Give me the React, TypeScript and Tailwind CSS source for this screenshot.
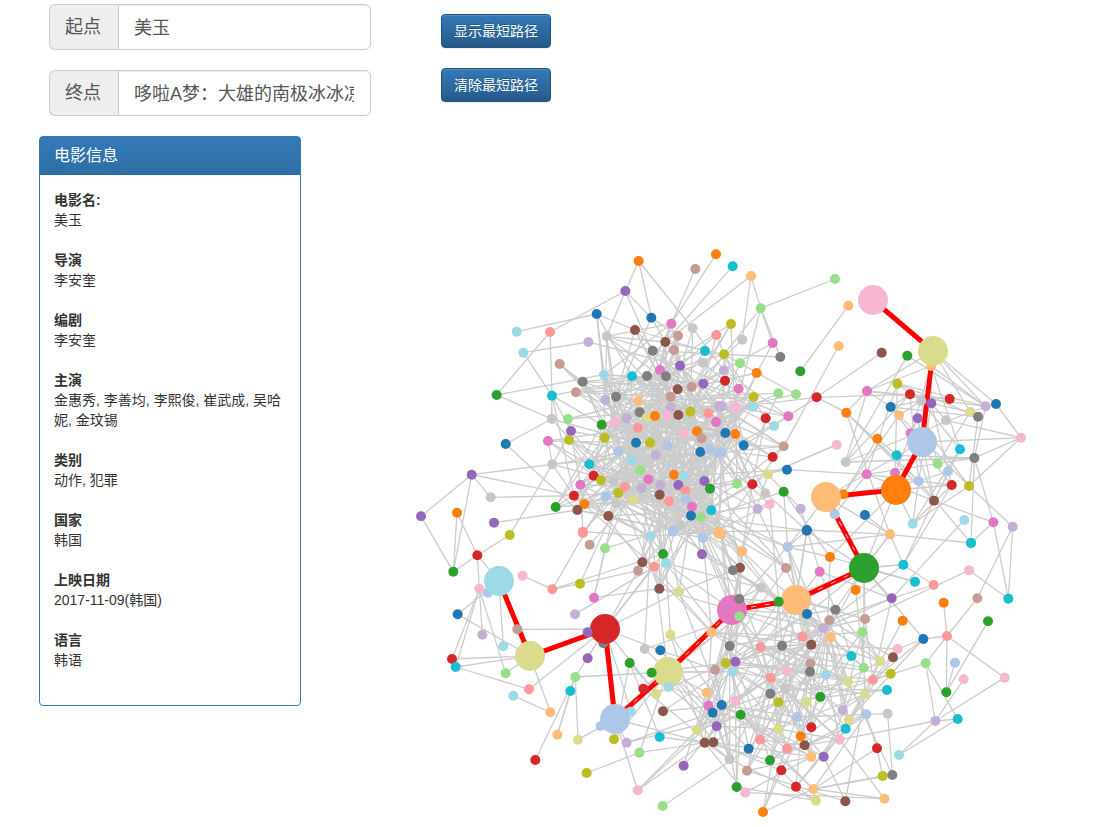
const COLORS: Record<string, string> = {
  b: '#1f77b4', B: '#aec7e8', o: '#ff7f0e', O: '#ffbb78', g: '#2ca02c', G: '#98df8a',
  r: '#d62728', R: '#ff9896', p: '#9467bd', P: '#c5b0d5', n: '#8c564b', N: '#c49c94',
  m: '#e377c2', M: '#f7b6d2', a: '#7f7f7f', A: '#c7c7c7', y: '#bcbd22', Y: '#dbdb8d',
  c: '#17becf', C: '#9edae5',
};

type GraphNode = { x: number; y: number; c: string; r: number };

// node lists: colour key + position, read off at 3x per quadrant
const parse = (ox: number, oy: number, s: string): GraphNode[] =>
  s.trim().split(/\s+/).map((t) => {
    const [x, y] = t.slice(1).split(',').map(Number);
    return { x: ox + x / 3, y: oy + y / 3, c: COLORS[t[0]], r: 5 };
  });

const topLeft = parse(400, 240, `o716,63 N886,87 o948,43 p676,153 b590,222 b754,233 m814,251 A878,265 N834,287 R949,285 n705,270 A620,289 P565,306 n796,306 R450,276 C350,275 C370,338 a758,332 N822,330 c915,333 N479,372 m780,390 p840,377 A908,368 C612,404 c696,409 a741,408 a798,409 a548,425 g290,465 c456,467 N528,457 n833,448 N875,441 p910,431 P616,480 a648,470 O714,483 N812,470 P812,502 A455,537 G504,537 a719,517 Y741,532 o765,528 M802,526 n835,525 y871,515 R925,520 P957,498 g605,554 M643,547 P680,535 m948,546 p513,573 R714,563 M853,581 o891,574 N905,595 m444,603 y507,600 y614,593 b317,612 b708,608 y750,608 B803,617 b901,636 B928,628 B957,638 B655,635 P767,645 A457,673 c568,673 C694,660 G721,690 p215,704 r581,707 y603,721 o822,704 C850,708 p913,723 A640,722 m745,718 P781,735 p835,735 m541,734 R675,741 P725,745 g930,746 R856,752 A272,772 r522,767 B617,769 y655,759 n779,764 Y700,781 R807,784 B857,777 A649,790 o553,792 g467,801 n532,810 n625,828 m876,800 c934,811 b873,827 G903,832 p63,829 o171,818 p282,848 A840,856 B820,870 R548,875 O955,875`);

const right = parse(720, 260, `c38,19 O93,48 G345,57 O385,137 G122,145 y33,192 A67,239 m158,249 O356,258 n485,278 g562,287 a181,291 y12,283 G60,310 g241,334 o110,339 P12,331 r15,362 m56,386 y101,411 G175,400 G228,403 r290,412 m441,393 y532,371 r570,403 r689,417 A604,422 p634,430 P797,439 b828,432 b512,441 o379,458 O537,466 p593,475 Y751,456 a774,470 A678,481 P5,439 M48,441 C100,440 r137,475 m205,469 C162,498 b16,519 o46,522 b71,556 M903,533 o472,536 c720,568 c530,586 N191,559 M350,554 r158,591 a763,594 A377,606 B5,578 G653,611 B684,634 b201,629 Y144,643 m440,643 B596,663 G51,671 r97,673 r695,675 y747,678 A136,700 g191,695 n642,722 M149,733 P113,747 P242,746 B344,763 b435,765 C578,791 C733,780 m820,787 P878,800 b261,810 O510,823 c753,849 B203,860 O66,873 O4,823`);

const bottomLeft = parse(400, 530, `y329,15 R549,9 N569,44 G615,55 C752,19 B819,5 B909,24 O955,12 r232,76 g160,125 g789,72 p906,73 n727,97 R763,110 C798,100 N714,122 M368,137 M238,176 R457,178 y540,161 n778,176 Y837,185 m582,203 b173,253 P525,253 P247,314 N352,298 p563,307 Y811,314 O935,307 A734,357 b781,361 C310,349 r156,387 c167,411 p563,385 g689,399 g755,428 G317,430 G526,441 N945,419 R387,478 r730,476 C806,471 C340,497 c511,483 Y769,491 O920,488 m925,527 b938,548 O451,547 n789,544 p950,589 Y891,601 O472,614 Y534,629 y642,628 P680,638 c779,621 n914,638 n940,637 G718,668 r406,690 y560,729 p851,707 M713,781 G788,828`);

const bottomRight = parse(700, 530, `O570,13 b320,2 c813,39 O127,64 B263,51 o390,81 c610,104 N258,114 m359,125 n120,113 a99,121 c645,155 M807,121 R701,165 A182,173 o467,180 p575,205 o731,218 N832,205 c925,206 a118,207 G118,259 g236,215 b321,252 a406,239 N388,271 N495,267 o608,272 g864,274 R741,318 b670,327 P370,295 G487,306 O392,322 R308,320 n334,344 a246,347 R182,351 a89,348 M593,357 c454,378 n579,382 Y541,394 G677,400 B765,398 y77,399 p106,395 N331,400 C99,425 G491,413 a330,425 C378,434 M260,423 R212,443 y572,431 M791,448 M914,443 Y444,455 R519,449 c561,480 g739,487 A255,477 a211,491 Y495,493 g361,501 M106,512 y235,517 Y319,516 b65,525 P428,540 g122,554 B291,561 B499,553 A563,551 Y446,570 P706,573 c773,567 Y235,597 r334,592 c437,596 o302,619 M419,629 R180,629 n314,646 b146,656 r531,655 R261,656 C597,675 O334,680 p371,680 A89,688 g210,691 N141,722 r244,721 y548,738 a577,735 g110,771 r288,770 O340,777 M136,788 Y348,812 n436,814 O553,806 o189,846`);

// small nodes that the big ones partly cover
const under = [
  ...parse(720, 260, `O633,318 m572,520 m525,639 o370,703`),
  ...parse(400, 530, `B264,188 a610,340 B602,588 C693,545`),
];

const big: GraphNode[] = [
  { x: 873, y: 300, c: COLORS.M, r: 15 },
  { x: 933, y: 351, c: COLORS.Y, r: 15 },
  { x: 922, y: 442, c: COLORS.B, r: 15 },
  { x: 896, y: 490, c: COLORS.o, r: 15 },
  { x: 826, y: 497, c: COLORS.O, r: 15 },
  { x: 864, y: 568, c: COLORS.g, r: 15 },
  { x: 796, y: 600, c: COLORS.O, r: 15 },
  { x: 732, y: 610, c: COLORS.m, r: 15 },
  { x: 668, y: 672, c: COLORS.Y, r: 15 },
  { x: 615, y: 719, c: COLORS.B, r: 15 },
  { x: 605, y: 629, c: COLORS.r, r: 15 },
  { x: 530, y: 656, c: COLORS.Y, r: 15 },
  { x: 499, y: 581, c: COLORS.C, r: 15 },
];

const small = [...topLeft, ...right, ...bottomLeft, ...bottomRight];
const all = [...under, ...big, ...small];

// links on the rim of the graph, snapped to the nearest node
const RIM = `639,261-625,291 625,291-550,332 625,291-651,318 625,291-607,336 517,332-597,314 597,314-604,375 597,314-635,330 550,332-552,396 523,353-588,342 523,353-552,396 497,395-550,332 497,395-552,419 552,396-552,419 506,444-552,419 506,444-577,510 548,441-552,464 472,475-552,464 472,475-491,497 472,475-421,516 472,475-453,572 491,497-574,496 494,523-577,510 552,464-510,535 421,516-453,572 457,513-453,572 457,513-490,560 510,535-477,555 453,572-477,555 477,555-499,581 477,555-479,589 522,576-552,589 552,589-580,584 580,584-638,571 594,598-605,548 594,598-660,589 575,614-660,571 458,614-499,581 458,614-530,656 482,635-479,589 503,646-499,581 452,659-479,589 455,667-479,589 452,659-530,656 455,667-530,656 455,667-529,690 505,673-479,589 505,673-530,656 514,696-550,712 529,690-605,629 550,712-530,656 558,734-575,677 558,734-571,691 578,740-575,677 578,740-615,719 535,760-575,677 587,773-640,753 638,790-730,700 663,806-740,750 695,269-671,324 716,254-671,324 733,266-672,340 751,276-672,340 751,276-761,308 835,279-761,308 761,308-781,357 761,308-772,343 761,308-725,354 848,306-800,371 839,346-784,446 882,352-817,397 817,397-846,413 908,356-846,462 933,351-986,407 933,351-996,404 933,351-969,412 996,404-969,412 986,407-974,458 1021,438-974,458 1021,438-969,486 1021,438-922,442 964,520-890,600 993,522-1008,599 1012,526-1001,570 1012,526-977,598 969,570-860,620 933,585-903,565 933,585-892,599 944,603-943,640 977,598-947,636 1008,599-965,570 988,621-946,692 947,636-923,639 947,636-926,663 947,636-1005,678 947,636-946,692 923,639-898,649 926,663-958,719 926,663-936,721 955,663-946,692 964,679-936,721 1005,678-936,721 936,721-958,719 936,721-847,740 958,719-899,755 899,755-936,721 892,775-883,775 883,775-877,748 892,775-887,713 763,812-781,770 816,800-737,787 884,799-745,792 884,799-813,789 845,801-824,757 813,789-816,800 813,789-892,775 813,789-877,748 813,789-883,775 864,568-884,530 864,568-903,565 864,568-892,599 864,568-915,582 864,568-835,610 864,568-865,619 826,497-922,442 826,497-870,540 893,534-903,565 893,534-865,515 893,534-807,530 893,534-787,547 919,481-912,524 952,485-912,524 969,486-912,524 846,462-912,390 846,462-969,412 846,462-966,458 846,413-912,490 846,413-936,495 846,413-880,540 867,391-846,413 867,391-846,462 867,391-986,407 867,391-950,399`;

const nearest = (x: number, y: number) => {
  let best = all[0];
  let d = Infinity;
  for (const n of all) {
    const dd = (n.x - x) ** 2 + (n.y - y) ** 2;
    if (dd < d) {
      d = dd;
      best = n;
    }
  }
  return best;
};

const links: [GraphNode, GraphNode][] = RIM.split(' ').map((t) => {
  const [a, b] = t.split('-').map((p) => p.split(',').map(Number));
  return [nearest(a[0], a[1]), nearest(b[0], b[1])];
});

// dense middle of the clusters, seeded so that it draws the same each run
let seed = 20171109;
const rand = () => {
  seed = (seed * 1664525 + 1013904223) >>> 0;
  return seed / 4294967296;
};
const dist = (a: GraphNode, b: GraphNode) => Math.hypot(a.x - b.x, a.y - b.y);
const CLUSTERS = [
  { x: 655, y: 455, r: 100, reach: 120, p: 0.06 },
  { x: 660, y: 350, r: 70, reach: 100, p: 0.035 },
  { x: 785, y: 700, r: 100, reach: 125, p: 0.06 },
  { x: 925, y: 440, r: 80, reach: 100, p: 0.065 },
  { x: 690, y: 580, r: 70, reach: 120, p: 0.03 },
  { x: 820, y: 590, r: 60, reach: 100, p: 0.05 },
];
for (const cl of CLUSTERS) {
  const core = all.filter((n) => Math.hypot(n.x - cl.x, n.y - cl.y) < cl.r);
  for (const a of core) {
    for (const b of all) {
      if (a !== b && dist(a, b) < cl.reach && rand() < cl.p) links.push([a, b]);
    }
  }
}

// fans round the big nodes on the lower part of the path
for (const hub of big.slice(5, 11)) {
  for (const b of all) {
    if (hub !== b && dist(hub, b) < 95 && rand() < 0.2) links.push([hub, b]);
  }
}

// every node that is still loose hangs on two of its neighbours
for (const a of small) {
  if (links.some(([p, q]) => p === a || q === a)) continue;
  const near = small.filter((b) => b !== a && dist(a, b) < 90);
  for (let k = 0; k < 2 && near.length; k++) {
    links.push([a, near[Math.floor(rand() * near.length)]]);
  }
}

const PATH = big.map((n) => `${n.x},${n.y}`).join(' ');

function Field({ label, value }: { label: string; value: string }) {
  return (
    <div className="flex h-[46px] w-[322px] text-[18px] text-[#555]">
      <span className="flex w-[69px] shrink-0 items-center justify-center rounded-l-md border border-r-0 border-[#ccc] bg-[#eee] pr-0.5">
        {label}
      </span>
      <input
        readOnly
        value={value}
        className="min-w-0 flex-1 rounded-r-md border border-[#ccc] bg-white pl-[15px] pr-4 pt-px shadow-[inset_0_1px_1px_rgba(0,0,0,0.075)] outline-none"
      />
    </div>
  );
}

function Info({ label, value }: { label: string; value: string }) {
  return (
    <div>
      <div className="font-bold">{label}</div>
      <div>{value}</div>
    </div>
  );
}

function PathButton({ children }: { children: string }) {
  return (
    <button className="h-[34px] w-[110px] rounded border border-[#245580] bg-gradient-to-b from-[#337ab7] to-[#265a88] text-sm text-white [text-shadow:0_-1px_0_rgba(0,0,0,0.2)] shadow-[inset_0_1px_0_rgba(255,255,255,0.15),0_1px_1px_rgba(0,0,0,0.075)]">
      {children}
    </button>
  );
}

function Graph() {
  return (
    <svg viewBox="400 240 702 587" className="mt-[138px] block h-[587px] w-[702px]">
      {links.map(([a, b], i) => (
        <line key={i} x1={a.x} y1={a.y} x2={b.x} y2={b.y} stroke="#ccc" strokeWidth={1.3} />
      ))}
      <polyline points={PATH} fill="none" stroke="#f00" strokeWidth={5} />
      {/* pale streaks where parallel links run along the red path */}
      <polyline
        points={big.slice(4, 10).map((n) => `${n.x},${n.y}`).join(' ')}
        fill="none"
        stroke="#f6d0d0"
        strokeWidth={1}
        strokeDasharray="5 9"
      />
      {all.map((n, i) => (
        <circle key={i} cx={n.x} cy={n.y} r={n.r} fill={n.c} />
      ))}
    </svg>
  );
}

export default function App() {
  return (
    <div className="flex h-[827px] w-[1102px] overflow-hidden bg-white font-['Liberation_Sans','Noto_Sans_CJK_SC',sans-serif] text-sm leading-5 text-[#333]">
      <div className="ml-[39px] w-[262px] shrink-0">
        <div className="ml-[10px] flex flex-col gap-5 pt-1">
          <Field label="起点" value="美玉" />
          <Field label="终点" value="哆啦A梦：大雄的南极冰冰凉大冒险" />
        </div>
        <div className="mt-5 h-[570px] rounded border border-[#337ab7]">
          <div className="flex h-[38px] items-center bg-gradient-to-b from-[#337ab7] to-[#2e6da4] px-[14px] text-base text-white">
            电影信息
          </div>
          <div className="flex flex-col gap-5 py-[15px] pl-[14px] pr-[15px]">
            <Info label="电影名:" value="美玉" />
            <Info label="导演" value="李安奎" />
            <Info label="编剧" value="李安奎" />
            <Info label="主演" value="金惠秀, 李善均, 李熙俊, 崔武成, 吴哈妮, 金玟锡" />
            <Info label="类别" value="动作, 犯罪" />
            <Info label="国家" value="韩国" />
            <Info label="上映日期" value="2017-11-09(韩国)" />
            <Info label="语言" value="韩语" />
          </div>
        </div>
      </div>
      <div className="ml-[99px] w-[702px] shrink-0">
        <div className="flex flex-col items-start gap-5 pl-[41px] pt-[14px]">
          <PathButton>显示最短路径</PathButton>
          <PathButton>清除最短路径</PathButton>
        </div>
        <Graph />
      </div>
    </div>
  );
}
